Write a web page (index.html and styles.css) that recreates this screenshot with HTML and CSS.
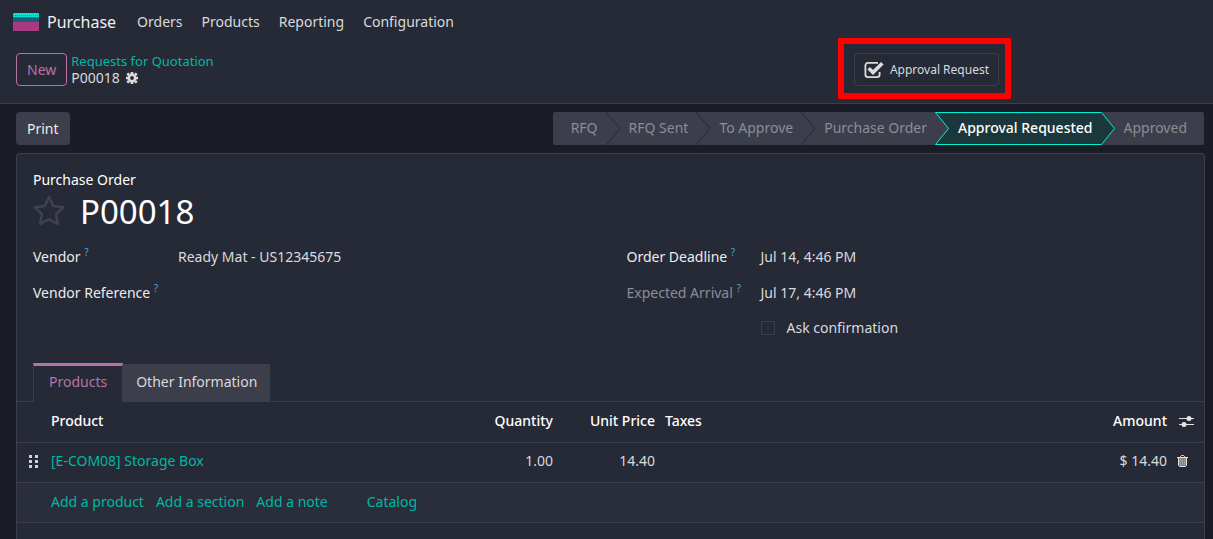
FILE: index.html
```html
<!DOCTYPE html>
<html lang="en">
<head>
  <meta charset="UTF-8" />
  <meta name="viewport" content="width=device-width, initial-scale=1.0"/>
  <title>P00018 - Purchase</title>
  <link rel="stylesheet" href="styles.css">
</head>
<body>
  <!-- NAVBAR -->
  <nav class="navbar">
    <a href="#" class="brand">
      <svg class="brand-icon" viewBox="0 0 26 18" width="26" height="18">
        <path fill="#a83a81" d="M0 8h26v9a1 1 0 0 1-1 1H1a1 1 0 0 1-1-1z"/>
        <path fill="#1d5d78" d="M0 4h26v5H0z"/>
        <path fill="#04e4cb" d="M1 0h24a1 1 0 0 1 1 1v3H0V1a1 1 0 0 1 1-1z"/>
        <path stroke="#07a79d" stroke-dasharray="1 1" d="M0 2.500h26M1 4.500h25"/>
      </svg>
      Purchase
    </a>
    <a href="#">Orders</a>
    <a href="#">Products</a>
    <a href="#">Reporting</a>
    <a href="#">Configuration</a>
  </nav>

  <!-- CONTROL PANEL -->
  <header class="control-panel">
    <button class="btn btn-outline">New</button>
    <div class="breadcrumb">
      <a href="#">Requests for Quotation</a>
      <div class="breadcrumb-current">
        <span>P00018</span>
        <svg viewBox="0 0 12 12" width="12" height="12">
          <circle cx="6" cy="6" r="3.200" fill="none" stroke="#dcdcd8" stroke-width="2.600"/>
          <path stroke="#dcdcd8" stroke-width="2.600" d="M6 0v2M6 10v2M0 6h2M10 6h2M1.300 1.300l1.700 1.700M9 9l1.700 1.700M1.300 10.700L3 9M9 3l1.700-1.700"/>
        </svg>
      </div>
    </div>
    <div class="stat-wrap">
      <button class="stat-btn">
        <svg viewBox="0 0 20 18" width="20" height="18">
          <path fill="none" stroke="#dcdcd8" stroke-width="1.800" d="M14 1.900H4A2.600 2.600 0 0 0 1.400 4.500v9A2.600 2.600 0 0 0 4 16.100h9a2.600 2.600 0 0 0 2.600-2.600V11"/>
          <path fill="none" stroke="#dcdcd8" stroke-width="3.600" d="M4.700 7.200l4.300 4.300 9.300-9.300"/>
        </svg>
        Approval Request
      </button>
    </div>
  </header>

  <main>
    <!-- STATUS BAR -->
    <div class="statusbar">
      <button class="btn btn-secondary">Print</button>
      <div class="steps">
        <button class="step">RFQ</button>
        <svg class="arrow" viewBox="0 0 14 33"><path d="M0 0l14 16.500L0 33"/></svg>
        <button class="step">RFQ Sent</button>
        <svg class="arrow" viewBox="0 0 14 33"><path d="M0 0l14 16.500L0 33"/></svg>
        <button class="step">To Approve</button>
        <svg class="arrow" viewBox="0 0 14 33"><path d="M0 0l14 16.500L0 33"/></svg>
        <button class="step">Purchase Order</button>
        <svg class="arrow arrow-on" viewBox="0 0 14 33">
          <path class="fill" d="M0 0h14v33H0l14-16.500z"/>
          <path d="M14 .5H.5l13 16-13 16H14"/>
        </svg>
        <button class="step active">Approval Requested</button>
        <svg class="arrow arrow-on" viewBox="0 0 14 33">
          <path class="fill" d="M0 0l14 16.500L0 33z"/>
          <path d="M0 .5h.5l13 16-13 16H0"/>
        </svg>
        <button class="step">Approved</button>
      </div>
    </div>

    <!-- FORM -->
    <section class="sheet">
      <div class="title-label">Purchase Order</div>
      <div class="title">
        <button class="star" aria-label="Priority">
          <svg viewBox="0 0 32 30" width="32" height="30">
            <path fill="none" stroke="#3f424e" stroke-width="2.600" stroke-linejoin="round" d="M16 2l4.300 9 9.900 1.300-7.200 6.800 1.800 9.800L16 24.100l-8.800 4.800L9 19.100l-7.200-6.800 9.900-1.300z"/>
          </svg>
        </button>
        <h1>P00018</h1>
      </div>

      <div class="groups">
        <div class="group">
          <div class="label">Vendor <sup>?</sup></div>
          <div class="value">Ready Mat - US12345675</div>
          <div class="label">Vendor Reference <sup>?</sup></div>
          <div class="value"></div>
        </div>
        <div class="group group-dates">
          <div class="label">Order Deadline <sup>?</sup></div>
          <div class="value">Jul 14, 4:46 PM</div>
          <div class="label muted">Expected Arrival <sup>?</sup></div>
          <div class="value">Jul 17, 4:46 PM</div>
          <div class="check">
            <input type="checkbox" id="askConfirmation" />
            <label for="askConfirmation">Ask confirmation</label>
          </div>
        </div>
      </div>

      <div class="tabs">
        <button class="tab-btn active">Products</button>
        <button class="tab-btn">Other Information</button>
      </div>

      <table class="lines">
        <colgroup>
          <col class="col-handle">
          <col>
          <col class="col-num">
          <col class="col-num">
          <col>
          <col class="col-num">
          <col class="col-action">
        </colgroup>
        <thead>
          <tr>
            <th></th>
            <th>Product</th>
            <th class="num">Quantity</th>
            <th class="num">Unit Price</th>
            <th>Taxes</th>
            <th class="num">Amount</th>
            <th class="action">
              <svg viewBox="0 0 15 13" width="15" height="13">
                <path stroke="#e4e4e4" d="M0 3.500h15M0 9.500h15"/>
                <circle cx="10" cy="3.500" r="2.500" fill="#e4e4e4"/>
                <circle cx="5" cy="9.500" r="2.500" fill="#e4e4e4"/>
              </svg>
            </th>
          </tr>
        </thead>
        <tbody>
          <tr>
            <td class="handle">
              <svg viewBox="0 0 9 13" width="9" height="13">
                <path fill="#d0d2d6" d="M0 0h3v3H0zM6 0h3v3H6zM0 5h3v3H0zM6 5h3v3H6zM0 10h3v3H0zM6 10h3v3H6z"/>
              </svg>
            </td>
            <td><a href="#">[E-COM08] Storage Box</a></td>
            <td class="num">1.00</td>
            <td class="num">14.40</td>
            <td></td>
            <td class="num">$ 14.40</td>
            <td class="action">
              <svg viewBox="0 0 11 12" width="11" height="12">
                <path fill="#b9763c" d="M2 3h7v8H2z"/>
                <path fill="none" stroke="#ece6dc" d="M0 2.500h11M3.500 2.500v-1l1-1h2l1 1v1M1.500 3v7.500l1 1h6l1-1V3"/>
                <path stroke="#8fa3b8" d="M3.500 4v6M5.500 4v6M7.500 4v6"/>
              </svg>
            </td>
          </tr>
          <tr class="add-row">
            <td></td>
            <td colspan="6">
              <div class="add-links">
                <a href="#">Add a product</a>
                <a href="#">Add a section</a>
                <a href="#">Add a note</a>
                <a href="#" class="catalog">Catalog</a>
              </div>
            </td>
          </tr>
        </tbody>
      </table>
    </section>
  </main>
</body>
</html>
```

FILE: styles.css
```css
:root {
  --bg: #1b1d26;
  --card: #262a36;
  --border: #3c3e4b;
  --text: #d8dadd;
  --title: #ffffff;
  --muted: #8b8d97;
  --link: #00b8a2;
  --accent: #b873a6;
  --active: #00f0d4;
  --active-bg: #1a373b;
}

* {
  box-sizing: border-box;
}

body {
  margin: 0;
  min-height: 100vh;
  display: flex;
  flex-direction: column;
  font-family: "Noto Sans", sans-serif;
  font-size: 14px;
  line-height: 20px;
  background: var(--bg);
  color: var(--text);
}

a {
  color: var(--link);
  text-decoration: none;
}

button {
  font: inherit;
  color: inherit;
  border: none;
  padding: 0;
  background: none;
  cursor: pointer;
}

svg {
  display: block;
}

.navbar {
  display: flex;
  align-items: center;
  gap: 19px;
  height: 46px;
  padding: 0 13px 2px;
  background: var(--card);
}

.navbar a {
  color: var(--text);
}

.navbar .brand {
  display: flex;
  align-items: center;
  gap: 8px;
  margin-right: 2px;
  font-size: 16px;
  color: #f0f0f0;
}

.control-panel {
  display: flex;
  align-items: flex-start;
  gap: 4px;
  height: 58px;
  padding: 7px 16px;
  background: var(--card);
  border-bottom: 1px solid var(--border);
}

.btn {
  height: 33px;
  padding: 0 10px;
  border: 1px solid transparent;
  border-radius: 4px;
}

.btn-outline {
  border-color: var(--accent);
  color: var(--accent);
}

.btn-secondary {
  background: var(--border);
  color: #ececec;
}

.breadcrumb {
  font-size: 13px;
  line-height: 17px;
}

.breadcrumb a {
  display: block;
}

.breadcrumb-current {
  display: flex;
  align-items: center;
  gap: 6px;
  font-size: 14px;
  line-height: 16px;
}

.stat-wrap {
  position: relative;
  margin-left: auto;
  margin-right: 198px;
}

/* red highlight round the button */
.stat-wrap::after {
  content: "";
  position: absolute;
  inset: -15px -12px -13px -16px;
  border: 6px solid #ff0000;
  pointer-events: none;
}

.stat-btn {
  display: flex;
  align-items: center;
  gap: 6px;
  height: 33px;
  padding: 0 9px;
  border: 1px solid var(--border);
  border-radius: 4px;
  font-size: 12px;
}

main {
  flex: 1;
  display: flex;
  flex-direction: column;
  padding: 8px 8px 0 16px;
}

.statusbar {
  display: flex;
  justify-content: space-between;
  padding-right: 1px;
}

.steps {
  display: flex;
  height: 33px;
  background: var(--border);
  border-radius: 2px;
}

.step {
  padding: 0 8px 1px 9px;
  color: var(--muted);
}

.step:first-child {
  padding-left: 18px;
}

.step:last-child {
  padding-right: 17px;
}

.step.active {
  color: #ffffff;
  font-weight: 500;
  background: var(--active-bg);
  border-top: 1px solid var(--active);
  border-bottom: 1px solid var(--active);
}

.arrow {
  width: 14px;
  height: 33px;
  fill: none;
  stroke: var(--card);
}

.arrow-on {
  stroke: var(--active);
}

.arrow .fill {
  fill: var(--active-bg);
  stroke: none;
}

.sheet {
  flex: 1;
  margin-top: 8px;
  padding: 16px 16px 0;
  background: var(--card);
  border: 1px solid var(--border);
  border-bottom: none;
  border-radius: 4px 4px 0 0;
}

.title-label {
  color: var(--title);
}

.title {
  display: flex;
  align-items: center;
  gap: 15px;
  height: 44px;
}

.star {
  padding-bottom: 4px;
}

.title h1 {
  margin: 0;
  font-size: 33px;
  line-height: 40px;
  font-weight: 400;
  color: var(--title);
}

.groups {
  display: grid;
  grid-template-columns: 1fr 1fr;
  gap: 32px;
  margin-top: 13px;
}

.group {
  display: grid;
  grid-template-columns: 145px 1fr;
  grid-auto-rows: 20px;
  row-gap: 16px;
  align-content: start;
}

.group-dates {
  grid-template-columns: 134px 1fr;
}

.label {
  color: #ececec;
  white-space: nowrap;
}

.label sup {
  font-size: 10px;
  line-height: 0;
  color: #5a9fd6;
}

.label.muted {
  color: var(--muted);
}

.check {
  grid-column: 2;
  display: flex;
  align-items: center;
  gap: 12px;
  padding-bottom: 3px;
}

.check input {
  appearance: none;
  width: 14px;
  height: 14px;
  margin: 0;
  border: 1px solid var(--border);
}

.tabs {
  display: flex;
  margin: 24px -16px 0;
  padding: 0 16px;
  border-bottom: 1px solid var(--border);
}

.tab-btn {
  height: 37px;
  margin-top: 1px;
  padding: 0 13px 2px;
  background: var(--border);
}

.tab-btn.active {
  height: 39px;
  margin: 0 0 -1px;
  padding: 0 15px 4px;
  color: var(--accent);
  background: var(--card);
  border: 1px solid var(--border);
  border-top: 3px solid var(--accent);
  border-bottom: none;
}

.lines {
  width: calc(100% + 32px);
  margin: 0 -16px;
  table-layout: fixed;
  border-collapse: collapse;
}

.lines tr {
  height: 40px;
  border-bottom: 1px solid var(--border);
}

.lines th,
.lines td {
  padding: 0 5px 2px;
  text-align: left;
}

.lines th {
  font-weight: 500;
  color: var(--title);
}

.lines .num {
  text-align: right;
}

.lines .handle {
  padding-left: 12px;
}

.lines th.action {
  padding: 0 7px;
}

.lines .add-row td {
  padding-bottom: 0;
}

.col-handle {
  width: 29px;
}

.col-num {
  width: 102px;
}

.col-action {
  width: 32px;
}

.add-row {
  background: #2a2d3a;
}

.add-links {
  display: flex;
  gap: 12px;
}

.add-links .catalog {
  margin-left: 27px;
}
```
